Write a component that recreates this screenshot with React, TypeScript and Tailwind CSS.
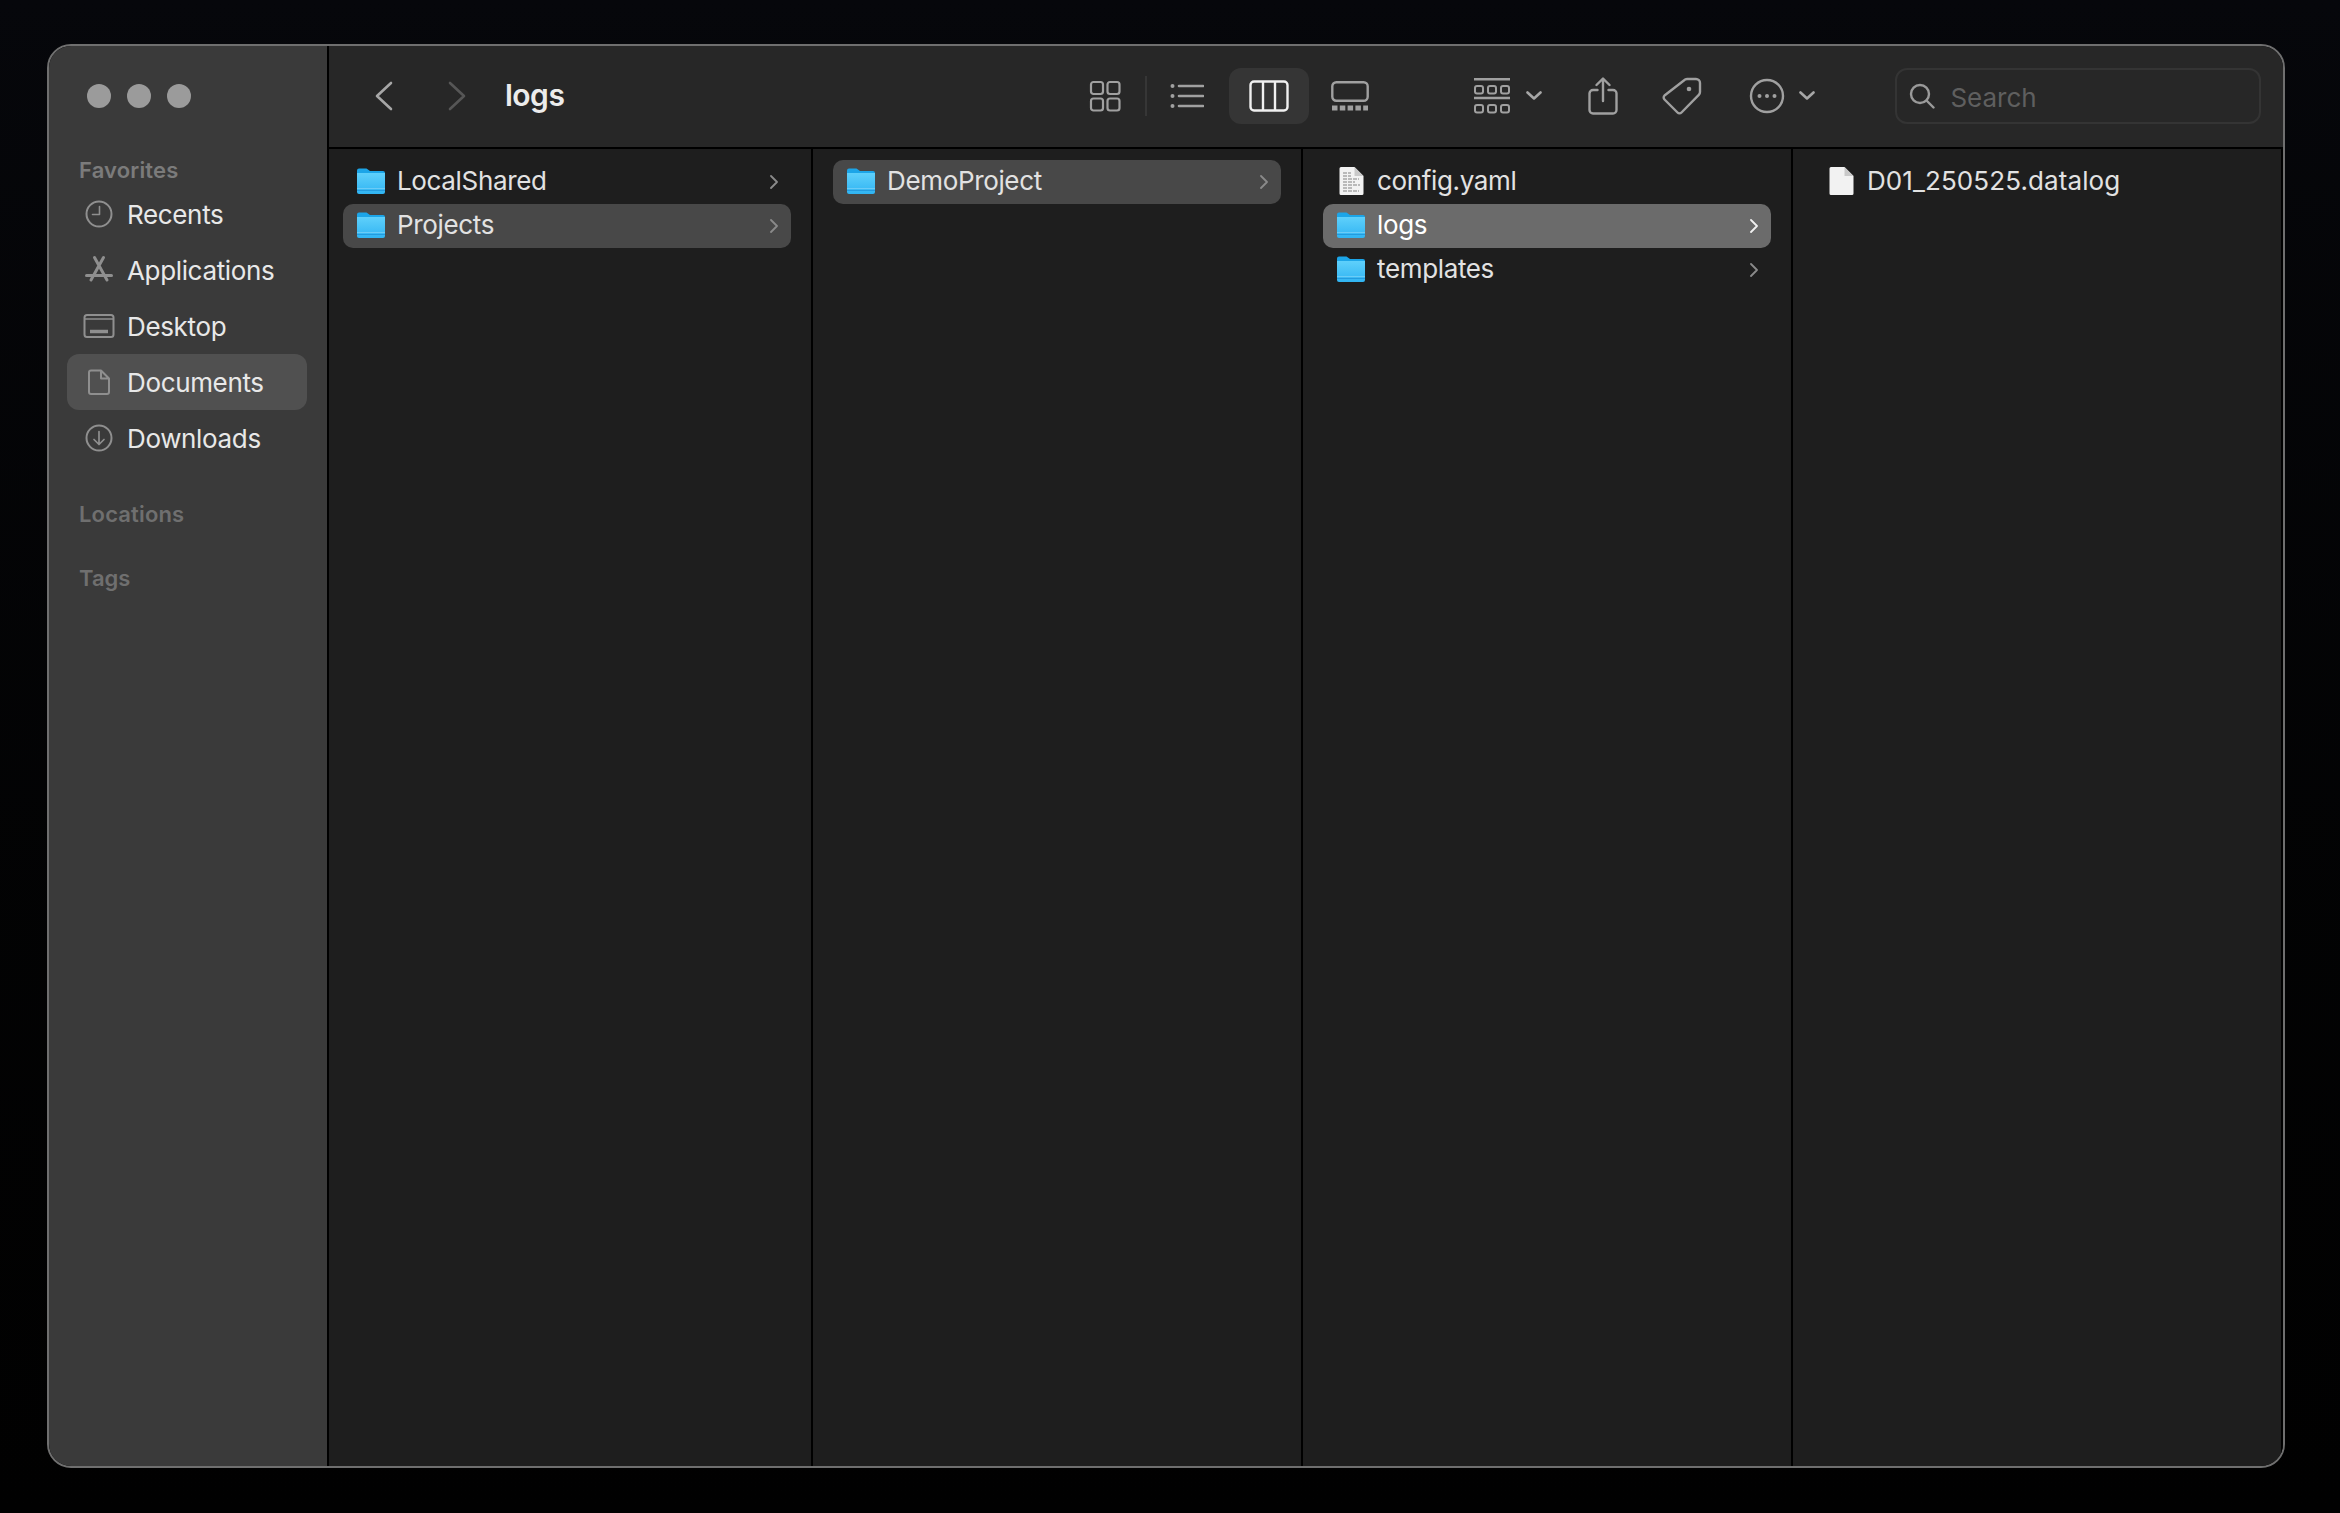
import React from 'react';

const sidebarItems = [
    { label: 'Recents', icon: 'clock' },
    { label: 'Applications', icon: 'apps' },
    { label: 'Desktop', icon: 'desktop' },
    { label: 'Documents', icon: 'doc', active: true },
    { label: 'Downloads', icon: 'download' },
];

const SidebarIcon = ({ name }: { name: string }) => (
    <svg width="32" height="32" viewBox="0 0 32 32" fill="none" stroke="#8f8f8f" strokeWidth="2" strokeLinecap="round" strokeLinejoin="round">
        {name === 'clock' && (
            <>
                <circle cx="16" cy="16" r="12.5" />
                <path d="M16.500 8.500V16.500H9.500" strokeWidth="1.6" />
            </>
        )}
        {name === 'apps' && (
            <>
                <path d="M11.500 3.500L24 26M20.500 3.500L8 26" strokeWidth="3" />
                <path d="M3.500 21.500H28.500" strokeWidth="3" />
            </>
        )}
        {name === 'desktop' && (
            <>
                <rect x="1.500" y="5" width="29" height="22" rx="2.500" />
                <path d="M2 9H30" strokeWidth="1.6" />
                <path d="M7 21.500H25" strokeWidth="3.500" strokeLinecap="butt" />
            </>
        )}
        {name === 'doc' && (
            <path d="M6 6.500A2 2 0 0 1 8 4.500H18L26 12.500V26A2 2 0 0 1 24 28H8A2 2 0 0 1 6 26ZM18 4.500V12.500H26" />
        )}
        {name === 'download' && (
            <>
                <circle cx="16" cy="16" r="12.500" />
                <path d="M16 9.500V22M11 17.500L16 22.500L21 17.500" strokeWidth="1.7" />
            </>
        )}
    </svg>
);

const FolderIcon = () => (
    <svg width="28" height="26" viewBox="0 0 28 26" className="mb-[2px] shrink-0">
        <defs>
            <linearGradient id="folderFill" x1="0" y1="0" x2="0" y2="1">
                <stop offset="0" stopColor="#5fd0fb" />
                <stop offset="1" stopColor="#30b4f2" />
            </linearGradient>
        </defs>
        <path d="M0 2.500A2 2 0 0 1 2 .500H9.500L13 3H26A2 2 0 0 1 28 5V12H0Z" fill="#1ca5e8" />
        <path d="M0 5H28V24A2 2 0 0 1 26 26H2A2 2 0 0 1 0 24Z" fill="url(#folderFill)" />
        <path d="M0 20.500H28" stroke="#7fd3f8" strokeWidth="1" opacity="0.7" />
        <path d="M0 22.500H28" stroke="#1c8fd6" strokeWidth="1" opacity="0.7" />
    </svg>
);

const FileIcon = ({ lines }: { lines?: boolean }) => (
    <svg width="28" height="28" viewBox="0 0 28 28" className="mb-[2px] shrink-0">
        <path d="M2.500 1.500A1.500 1.500 0 0 1 4 0H17.500L26.500 9V26.500A1.500 1.500 0 0 1 25 28H4A1.500 1.500 0 0 1 2.500 26.500Z" fill="#f2f2f2" />
        <path d="M17.500 0V9H26.500Z" fill="#c9c9c9" />
        {lines && (
            <path
                d="M6 6H14M6 9H14M6 12H22M6 15H18M6 18H23M6 21H15M6 24H22"
                stroke="#a8a8a8"
                strokeWidth="1.300"
                strokeDasharray="4 1"
            />
        )}
    </svg>
);

const Row = ({ name, kind, bg, chevron, bright, wide }: { name: string; kind: 'folder' | 'yaml' | 'file'; bg?: string; chevron?: boolean; bright?: boolean; wide?: boolean }) => (
    <div className={`flex h-[44px] w-[448px] items-center rounded-[10px] pl-[14px] pr-[13px] ${bg ?? ''}`}>
        <div className="flex w-[40px] shrink-0">
            {kind === 'folder' ? <FolderIcon /> : <FileIcon lines={kind === 'yaml'} />}
        </div>
        <span className={`flex-1 pb-[2px] text-[26px] leading-none ${wide ? 'tracking-[0.1px]' : 'tracking-[-0.35px]'} ${bright ? 'text-white' : 'text-[#e2e2e2]'}`}>{name}</span>
        {chevron && (
            <svg width="8" height="14" viewBox="0 0 8 14" fill="none" stroke={bright ? '#f0f0f0' : '#8a8a8a'} strokeWidth="1.800" strokeLinecap="round" strokeLinejoin="round" className="mb-[1px]">
                <path d="M1 1L7 7L1 13" />
            </svg>
        )}
    </div>
);

const ToolbarChevron = ({ className }: { className: string }) => (
    <svg width="16" height="9" viewBox="0 0 16 9" fill="none" stroke="#a6a6a6" strokeWidth="2.600" strokeLinecap="round" strokeLinejoin="round" className={className}>
        <path d="M1.500 1.500L8 7.500L14.500 1.500" />
    </svg>
);

const App = () => {
    return (
        <div
            className="h-[1513px] w-[2340px] overflow-hidden bg-gradient-to-b from-[#06070b] to-[#010101] pl-[47px] pt-[44px]"
            style={{ fontFamily: 'Inter, "Liberation Sans", sans-serif' }}
        >
            <div className="flex h-[1424px] w-[2238px] overflow-hidden rounded-[24px] border-2 border-[#6f6f6f]">
                {/* sidebar */}
                <aside className="flex w-[280px] shrink-0 flex-col border-r-2 border-black bg-[#3a3a3a] pl-[18px] pr-[20px]">
                    <div className="ml-[20px] mt-[38px] flex gap-[16px]">
                        <span className="h-[24px] w-[24px] rounded-full bg-[#9b9b9b]" />
                        <span className="h-[24px] w-[24px] rounded-full bg-[#9b9b9b]" />
                        <span className="h-[24px] w-[24px] rounded-full bg-[#9b9b9b]" />
                    </div>
                    <div className="ml-[12px] mt-[47px] flex h-[30px] items-center text-[22px] font-semibold tracking-[0.15px] text-[#7b7b7b]">Favorites</div>
                    <div className="mt-[1px] flex flex-col">
                        {sidebarItems.map((item) => (
                            <div key={item.label} className={`flex h-[56px] items-center rounded-[12px] pl-[16px] ${item.active ? 'bg-[#505050]' : ''}`}>
                                <SidebarIcon name={item.icon} />
                                <span className="ml-[12px] pt-[1px] text-[26px] leading-none tracking-[-0.35px] text-[#e8e8e8]">{item.label}</span>
                            </div>
                        ))}
                    </div>
                    <div className="ml-[12px] mt-[33px] flex h-[30px] items-center text-[22px] font-semibold tracking-[0.15px] text-[#6f6f6f]">Locations</div>
                    <div className="ml-[12px] mt-[34px] flex h-[30px] items-center text-[22px] font-semibold text-[#6f6f6f]">Tags</div>
                </aside>

                <main className="flex min-w-0 flex-1 flex-col">
                    {/* toolbar */}
                    <header className="flex h-[103px] shrink-0 items-center border-b-2 border-black bg-[#272727] pb-[2px]">
                        <svg width="18" height="30" viewBox="0 0 18 30" fill="none" stroke="#a6a6a6" strokeWidth="2.600" strokeLinecap="round" strokeLinejoin="round" className="ml-[46px]">
                            <path d="M16 2L2 15L16 28" />
                        </svg>
                        <svg width="18" height="30" viewBox="0 0 18 30" fill="none" stroke="#565656" strokeWidth="2.600" strokeLinecap="round" strokeLinejoin="round" className="ml-[55px]">
                            <path d="M2 2L16 15L2 28" />
                        </svg>
                        <span className="ml-[39px] pb-[2px] text-[30px] font-semibold leading-none tracking-[-0.5px] text-[#ececec]">logs</span>

                        {/* view switcher */}
                        <svg width="32" height="32" viewBox="0 0 32 32" fill="none" stroke="#a0a0a0" strokeWidth="2.200" className="ml-[525px]">
                            <rect x="2" y="2" width="12" height="12" rx="2.500" />
                            <rect x="18.500" y="2" width="12" height="12" rx="2.500" />
                            <rect x="2" y="18.500" width="12" height="12" rx="2.500" />
                            <rect x="18.500" y="18.500" width="12" height="12" rx="2.500" />
                        </svg>
                        <span className="ml-[24px] h-[40px] w-[2px] bg-[#363636]" />
                        <svg width="34" height="28" viewBox="0 0 34 28" fill="none" stroke="#a0a0a0" strokeWidth="2.600" strokeLinecap="round" className="ml-[23px]">
                            <path d="M9 4H33M9 14H33M9 24H33" />
                            <circle cx="2.500" cy="4" r="2" fill="#a0a0a0" stroke="none" />
                            <circle cx="2.500" cy="14" r="2" fill="#a0a0a0" stroke="none" />
                            <circle cx="2.500" cy="24" r="2" fill="#a0a0a0" stroke="none" />
                        </svg>
                        <div className="ml-[25px] flex h-[56px] w-[80px] items-center justify-center rounded-[12px] bg-[#353535]">
                            <svg width="40" height="32" viewBox="0 0 40 32" fill="none" stroke="#f0f0f0" strokeWidth="2.400">
                                <rect x="1.500" y="1.500" width="37" height="29" rx="3.500" />
                                <path d="M14 2V30M26 2V30" />
                            </svg>
                        </div>
                        <svg width="38" height="30" viewBox="0 0 38 30" fill="none" className="ml-[22px]">
                            <rect x="1.300" y="1.300" width="35.400" height="18.500" rx="4" stroke="#a0a0a0" strokeWidth="2.400" />
                            <path d="M1 27H37" stroke="#a0a0a0" strokeWidth="5" strokeDasharray="5.500 2.300" />
                        </svg>

                        {/* group by */}
                        <svg width="36" height="36" viewBox="0 0 36 36" fill="none" stroke="#a0a0a0" className="ml-[105px]">
                            <path d="M0 1.200H36M0 20H36" strokeWidth="2.400" />
                            <rect x="1" y="8" width="8" height="7.500" rx="2" strokeWidth="2" />
                            <rect x="14" y="8" width="8" height="7.500" rx="2" strokeWidth="2" />
                            <rect x="27" y="8" width="8" height="7.500" rx="2" strokeWidth="2" />
                            <rect x="1" y="27" width="8" height="7.500" rx="2" strokeWidth="2" />
                            <rect x="14" y="27" width="8" height="7.500" rx="2" strokeWidth="2" />
                            <rect x="27" y="27" width="8" height="7.500" rx="2" strokeWidth="2" />
                        </svg>
                        <ToolbarChevron className="ml-[16px]" />

                        {/* share */}
                        <svg width="30" height="38" viewBox="0 0 30 38" fill="none" stroke="#a0a0a0" strokeWidth="2.400" strokeLinecap="round" strokeLinejoin="round" className="ml-[46px]">
                            <path d="M9.500 13H5A3.500 3.500 0 0 0 1.500 16.500V33A3.500 3.500 0 0 0 5 36.500H25A3.500 3.500 0 0 0 28.500 33V16.500A3.500 3.500 0 0 0 25 13H20.500" />
                            <path d="M15 24V2M8.500 8L15 1.500L21.500 8" />
                        </svg>

                        {/* tag */}
                        <svg width="40" height="38" viewBox="0 0 40 38" fill="none" stroke="#a0a0a0" strokeWidth="2.400" strokeLinejoin="round" className="ml-[44px]">
                            <path d="M25 2H34A4 4 0 0 1 38 6L38 15A4 4 0 0 1 36.800 17.800L19.500 35.500A2.800 2.800 0 0 1 15.500 35.500L2.500 22.500A2.800 2.800 0 0 1 2.500 18.500L22.200 3.200A4 4 0 0 1 25 2Z" />
                            <circle cx="27" cy="12" r="2.300" fill="#a0a0a0" stroke="none" />
                        </svg>

                        {/* more */}
                        <svg width="36" height="36" viewBox="0 0 36 36" fill="none" stroke="#a0a0a0" strokeWidth="2.400" className="ml-[47px]">
                            <circle cx="18" cy="18" r="16" />
                            <circle cx="10.500" cy="18" r="2" fill="#a0a0a0" stroke="none" />
                            <circle cx="18" cy="18" r="2" fill="#a0a0a0" stroke="none" />
                            <circle cx="25.500" cy="18" r="2" fill="#a0a0a0" stroke="none" />
                        </svg>
                        <ToolbarChevron className="ml-[14px]" />

                        {/* search */}
                        <div className="ml-[80px] flex h-[56px] w-[366px] items-center rounded-[12px] border-2 border-[#343434] pl-[12px]">
                            <svg width="26" height="26" viewBox="0 0 26 26" fill="none" stroke="#9a9a9a" strokeWidth="2.400" strokeLinecap="round">
                                <circle cx="11" cy="11" r="9" />
                                <path d="M17.500 17.500L24.500 24.500" />
                            </svg>
                            <span className="ml-[15px] mt-[4px] text-[26px] leading-none text-[#5f5f5f]">Search</span>
                        </div>
                    </header>

                    {/* columns */}
                    <div className="flex flex-1 bg-[#1e1e1e]">
                        <section className="w-[484px] border-r-2 border-black pl-[14px] pt-[11px]">
                            <Row name="LocalShared" kind="folder" chevron />
                            <Row name="Projects" kind="folder" bg="bg-[#484848]" chevron />
                        </section>
                        <section className="w-[490px] border-r-2 border-black pl-[20px] pt-[11px]">
                            <Row name="DemoProject" kind="folder" bg="bg-[#484848]" chevron />
                        </section>
                        <section className="w-[490px] border-r-2 border-black pl-[20px] pt-[11px]">
                            <Row name="config.yaml" kind="yaml" />
                            <Row name="logs" kind="folder" bg="bg-[#6b6b6b]" chevron bright />
                            <Row name="templates" kind="folder" chevron />
                        </section>
                        <section className="w-[490px] border-r-2 border-black pl-[20px] pt-[11px]">
                            <Row name="D01_250525.datalog" kind="file" wide />
                        </section>
                    </div>
                </main>
            </div>
        </div>
    );
};

export default App;
